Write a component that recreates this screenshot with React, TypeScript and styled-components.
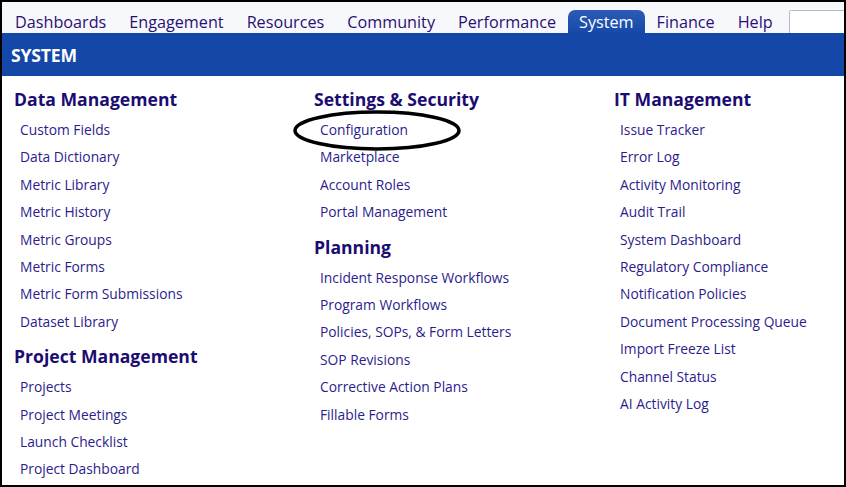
import styled, { createGlobalStyle } from 'styled-components';

const GlobalStyle = createGlobalStyle`
  html, body {
    margin: 0;
    padding: 0;
    background: #ffffff;
  }
  body {
    font-family: 'Open Sans', 'Noto Sans', sans-serif;
  }
`;

const Frame = styled.div`
  position: relative;
  width: 846px;
  height: 487px;
  box-sizing: border-box;
  border: 2px solid #000;
  overflow: hidden;
  background: #fff;
`;

const NavBar = styled.nav`
  display: flex;
  align-items: flex-end;
  height: 31px;
  padding-left: 1.5px;
  background: #f7f8fc;
`;

const Tab = styled.a<{ $active?: boolean }>`
  display: block;
  height: 23px;
  padding: 0 11.5px;
  font-size: 16.2px;
  line-height: 25px;
  white-space: nowrap;
  color: ${(p) => (p.$active ? '#ffffff' : '#2a0f72')};
  background: ${(p) => (p.$active ? 'linear-gradient(#2c5bb6, #1649aa)' : 'transparent')};
  border-radius: 7px 7px 0 0;
  text-decoration: none;
  cursor: pointer;
`;

const Search = styled.input`
  flex: none;
  width: 70px;
  height: 23px;
  margin-left: 5px;
  box-sizing: border-box;
  border: 1px solid #b8bcc8;
  border-bottom: none;
  border-radius: 2px 2px 0 0;
  background: #fff;
`;

const Banner = styled.div`
  height: 43px;
  display: flex;
  align-items: center;
  padding-left: 9px;
  background: #1447a8;
  color: #fff;
  font-size: 17.6px;
  font-weight: 700;
  letter-spacing: -0.2px;
`;

const Columns = styled.div`
  display: grid;
  grid-template-columns: 300px 300px 300px;
  padding: 11px 0 0 12px;
`;

const Column = styled.div`
  display: flex;
  flex-direction: column;
  gap: 9px;
`;

const Section = styled.section`
  display: flex;
  flex-direction: column;
`;

const Heading = styled.h2`
  margin: 0 0 5px;
  font-size: 17.6px;
  line-height: 24px;
  font-weight: 700;
  color: #1b0c72;
  white-space: nowrap;
`;

const LinkList = styled.ul`
  list-style: none;
  margin: 0;
  padding: 0 0 0 6px;
`;

const Item = styled.li`
  position: relative;
  font-size: 13.8px;
  line-height: 27.4px;
  color: #2c1c8c;
  white-space: nowrap;
`;

const Circled = styled.svg`
  position: absolute;
  left: -28px;
  top: -5px;
  width: 170px;
  height: 42px;
  overflow: visible;
  pointer-events: none;
`;

type Group = { title: string; links: string[] };

const columns: Group[][] = [
  [
    {
      title: 'Data Management',
      links: [
        'Custom Fields',
        'Data Dictionary',
        'Metric Library',
        'Metric History',
        'Metric Groups',
        'Metric Forms',
        'Metric Form Submissions',
        'Dataset Library',
      ],
    },
    {
      title: 'Project Management',
      links: ['Projects', 'Project Meetings', 'Launch Checklist', 'Project Dashboard'],
    },
  ],
  [
    {
      title: 'Settings & Security',
      links: ['Configuration', 'Marketplace', 'Account Roles', 'Portal Management'],
    },
    {
      title: 'Planning',
      links: [
        'Incident Response Workflows',
        'Program Workflows',
        'Policies, SOPs, & Form Letters',
        'SOP Revisions',
        'Corrective Action Plans',
        'Fillable Forms',
      ],
    },
  ],
  [
    {
      title: 'IT Management',
      links: [
        'Issue Tracker',
        'Error Log',
        'Activity Monitoring',
        'Audit Trail',
        'System Dashboard',
        'Regulatory Compliance',
        'Notification Policies',
        'Document Processing Queue',
        'Import Freeze List',
        'Channel Status',
        'AI Activity Log',
      ],
    },
  ],
];

const tabs = ['Dashboards', 'Engagement', 'Resources', 'Community', 'Performance', 'System', 'Finance', 'Help'];

export default function App() {
  return (
    <>
      <GlobalStyle />
      <Frame>
        <NavBar>
          {tabs.map((t) => (
            <Tab key={t} $active={t === 'System'}>
              {t}
            </Tab>
          ))}
          <Search type="text" />
        </NavBar>
        <Banner>SYSTEM</Banner>
        <Columns>
          {columns.map((col, i) => (
            <Column key={i}>
              {col.map((g) => (
                <Section key={g.title}>
                  <Heading>{g.title}</Heading>
                  <LinkList>
                    {g.links.map((l) => (
                      <Item key={l}>
                        {l}
                        {l === 'Configuration' && (
                          <Circled viewBox="0 0 170 42">
                            <ellipse cx="85" cy="19.5" rx="82" ry="18.5" fill="none" stroke="#000" strokeWidth="3.5" />
                          </Circled>
                        )}
                      </Item>
                    ))}
                  </LinkList>
                </Section>
              ))}
            </Column>
          ))}
        </Columns>
      </Frame>
    </>
  );
}
